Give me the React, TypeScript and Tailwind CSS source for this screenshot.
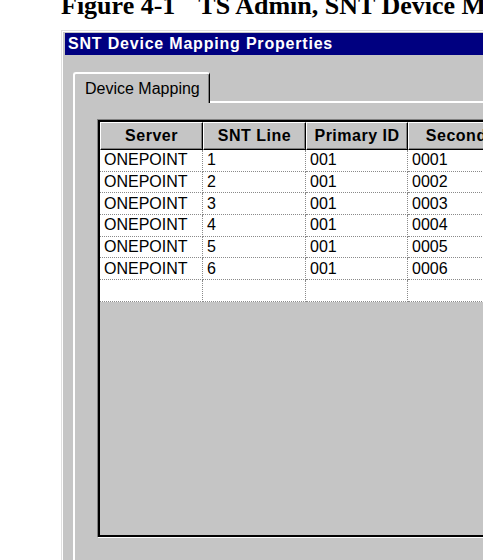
const cols = [
  { label: 'Server', w: 'w-[103px]' },
  { label: 'SNT Line', w: 'w-[103px]' },
  { label: 'Primary ID', w: 'w-[102px]' },
  { label: 'Secondary ID', w: 'w-[144px]' },
  { label: '', w: 'w-[200px]' },
]

const rows = [1, 2, 3, 4, 5, 6].map((n) => ['ONEPOINT', String(n), '001', '000' + n, ''])

function Cell({ w, text }: { w: string; text: string }) {
  return (
    <div
      className={`${w} h-[21.7px] shrink-0 bg-white border-r border-b border-dotted border-[#8a8a8a] pl-[4px] flex items-center leading-none whitespace-nowrap`}
    >
      {text}
    </div>
  )
}

export default function App() {
  return (
    <div className="w-[483px] h-[560px] overflow-hidden bg-white font-['Liberation_Sans',Arial,sans-serif] text-black">
      <div className="-mt-[7px] h-[37px] pl-[61px] whitespace-nowrap font-['Liberation_Serif',serif] font-bold text-[26px] leading-[26px]">
        <span>Figure 4-1</span>
        <span className="ml-[23px]">TS Admin, SNT Device Mapping Properties</span>
      </div>

      <div className="ml-[61px] w-[700px] border-l border-t border-[#dfdfdf]">
        <div className="h-[600px] border-l border-t border-white bg-[#c5c5c5] pl-[2px] pt-[1px]">
          <div className="h-[22px] bg-[#000080] text-white font-bold text-[16px] tracking-[0.8px] pl-[3px] flex items-center whitespace-nowrap">
            SNT Device Mapping Properties
          </div>

          <div className="pl-[8px] pt-[17px]">
            <div className="relative z-10 -mb-[2px] w-[137px] h-[31px] bg-[#c5c5c5] border-l-2 border-t-2 border-white border-r border-r-black rounded-t-[3px] shadow-[inset_-1px_0_0_#808080] pl-[10px] flex items-center text-[16px] whitespace-nowrap">
              Device Mapping
            </div>

            <div className="h-[600px] border-l-2 border-t-2 border-white pl-[22px] pt-[16px]">
              <div className="w-[700px] h-[419px] border-t border-l border-[#808080] border-b border-r border-b-white border-r-white">
                <div className="h-full border-2 border-black bg-[#c5c5c5] text-[16px]">
                  <div className="flex">
                    {cols.map((c, i) => (
                      <div
                        key={i}
                        className={`${c.w} h-[28px] shrink-0 border-t border-l border-white border-r border-b border-r-black border-b-black shadow-[inset_-1px_-1px_0_#808080] flex items-center justify-center font-bold tracking-[0.5px] whitespace-nowrap`}
                      >
                        {c.label}
                      </div>
                    ))}
                  </div>
                  {[...rows, ['', '', '', '', '']].map((r, ri) => (
                    <div key={ri} className="flex">
                      {r.map((t, ci) => (
                        <Cell key={ci} w={cols[ci].w} text={t} />
                      ))}
                    </div>
                  ))}
                </div>
              </div>
            </div>
          </div>
        </div>
      </div>
    </div>
  )
}
